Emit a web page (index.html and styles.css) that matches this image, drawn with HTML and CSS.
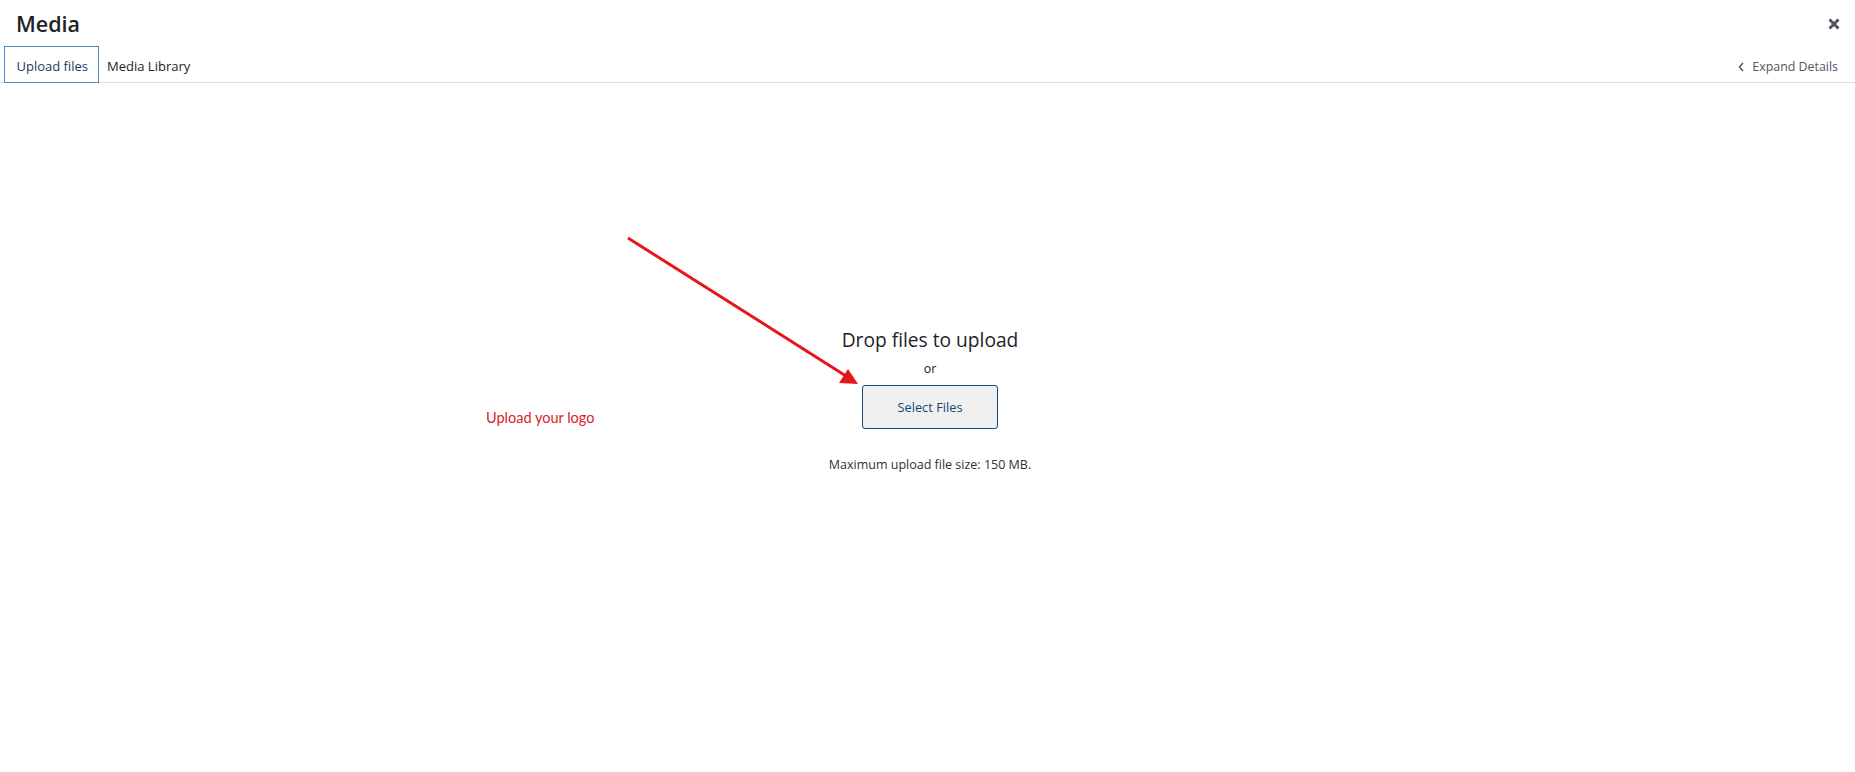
FILE: index.html
```html
<!DOCTYPE html>
<html lang="en">
<head>
<meta charset="utf-8">
<title>Media</title>
<link rel="stylesheet" href="styles.css">
</head>
<body>
<div class="frame">
  <header class="title-bar">
    <h1 class="title">Media</h1>
    <button class="close" aria-label="Close">
      <svg width="12" height="12" viewBox="0 0 12 12"><path d="M1.5 1.5 L10.5 10.5 M10.5 1.5 L1.5 10.5" stroke="#50575e" stroke-width="3" stroke-linecap="butt"/></svg>
    </button>
  </header>
  <nav class="router">
    <div class="tabs">
      <a class="tab active">Upload files</a>
      <a class="tab">Media Library</a>
    </div>
    <a class="expand">
      <svg class="chev" width="6" height="10" viewBox="0 0 6 10"><path d="M5 1 L1.5 5 L5 9" fill="none" stroke="#50575e" stroke-width="1.5"/></svg>
      <span>Expand Details</span>
    </a>
  </nav>
  <main class="upload">
    <h2 class="drop">Drop files to upload</h2>
    <p class="or">or</p>
    <button class="select">Select Files</button>
    <p class="max">Maximum upload file size: 150 MB.</p>
  </main>
</div>
<div class="annotation">
  <svg class="arrow" width="1855" height="772" viewBox="0 0 1855 772">
    <line x1="628" y1="238" x2="846" y2="376" stroke="#e8161b" stroke-width="3"/>
    <polygon points="858,384 839,383 848,369" fill="#e8161b"/>
  </svg>
  <span class="note">Upload your logo</span>
</div>
</body>
</html>
```
FILE: styles.css
```css
html, body {
  margin: 0;
  padding: 0;
  background: #fff;
}
body {
  font-family: "Open Sans", "Noto Sans", sans-serif;
  color: #1d2327;
  width: 1855px;
  height: 772px;
  overflow: hidden;
  position: relative;
}
.frame {
  display: flex;
  flex-direction: column;
}
.title-bar {
  height: 46px;
  display: flex;
  justify-content: space-between;
  align-items: flex-start;
}
.title {
  margin: 0;
  padding: 1px 16px 0;
  font-size: 21.5px;
  font-weight: 600;
  line-height: 45px;
  color: #1d2327;
}
.close {
  border: 0;
  background: none;
  padding: 0;
  margin: 18px 15px 0 0;
  width: 12px;
  height: 12px;
  display: flex;
}
.router {
  height: 36px;
  border-bottom: 1px solid #dcdcde;
  display: flex;
  justify-content: space-between;
  align-items: flex-start;
  padding-left: 4px;
}
.tabs {
  display: flex;
}
.tab {
  font-size: 13px;
  line-height: 32px;
  padding: 3px 10px 0 11.5px;
  border: 1px solid transparent;
  color: #1d2327;
  height: 32px;
}
.tab.active {
  border-color: #4a8cc9;
  color: #1d3b5a;
}
.tab + .tab {
  padding-left: 7px;
}
.expand {
  display: flex;
  align-items: center;
  gap: 8px;
  height: 36px;
  padding-top: 4px;
  box-sizing: border-box;
  padding-right: 17px;
  font-size: 12.4px;
  color: #50575e;
}
.chev {
  margin-top: 1px;
}
.upload {
  display: flex;
  flex-direction: column;
  align-items: center;
  padding-top: 243px;
  padding-left: 5px;
}
.drop {
  margin: 0;
  font-size: 19.2px;
  font-weight: 400;
  line-height: 28px;
  color: #1d2327;
}
.or {
  margin: 5px 0 0;
  font-size: 12.5px;
  line-height: 20px;
  color: #1d2327;
}
.select {
  margin-top: 6px;
  height: 44px;
  padding: 0 35px;
  font-family: "Open Sans", "Noto Sans", sans-serif;
  font-size: 12.8px;
  color: #134a72;
  background: #f0f0f1;
  border: 1px solid #1f4868;
  border-radius: 3px;
}
.max {
  margin: 26px 0 0;
  font-size: 12.5px;
  line-height: 20px;
  color: #2c3338;
}
.annotation {
  position: absolute;
  left: 0;
  top: 0;
  width: 1855px;
  height: 772px;
  pointer-events: none;
}
.arrow {
  position: absolute;
  left: 0;
  top: 0;
}
.note {
  position: absolute;
  left: 486px;
  top: 409px;
  font-family: "Lato", "Open Sans", sans-serif;
  font-size: 14.5px;
  color: #d9232a;
}
```
